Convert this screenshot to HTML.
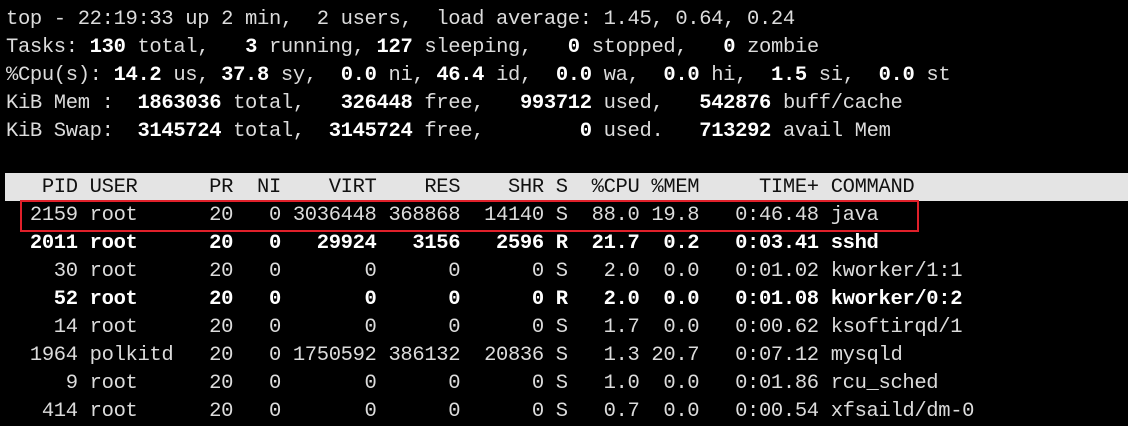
<!DOCTYPE html>
<html><head><style>
html,body{margin:0;padding:0;background:#000;width:1128px;height:414px;overflow:hidden}
pre{margin:0;position:absolute;left:6px;top:6px;font-family:"Liberation Mono",monospace;font-size:20.5px;letter-spacing:-0.35px;line-height:28px;color:#dcdcdc}
b{color:#fff}
.hdr{position:absolute;left:5px;top:173px;width:1123px;height:28px;background:#e4e4e4}
.hl{color:#111}
.box{position:absolute;left:20px;top:200px;width:895px;height:28px;border:2px solid #e0202a}
</style></head><body>
<div class="hdr"></div>
<pre>top - 22:19:33 up 2 min,  2 users,  load average: 1.45, 0.64, 0.24
Tasks: <b>130</b> total,   <b>3</b> running, <b>127</b> sleeping,   <b>0</b> stopped,   <b>0</b> zombie
%Cpu(s): <b>14.2</b> us, <b>37.8</b> sy,  <b>0.0</b> ni, <b>46.4</b> id,  <b>0.0</b> wa,  <b>0.0</b> hi,  <b>1.5</b> si,  <b>0.0</b> st
KiB Mem :  <b>1863036</b> total,   <b>326448</b> free,   <b>993712</b> used,   <b>542876</b> buff/cache
KiB Swap:  <b>3145724</b> total,  <b>3145724</b> free,        <b>0</b> used.   <b>713292</b> avail Mem

<span class="hl">   PID USER      PR  NI    VIRT    RES    SHR S  %CPU %MEM     TIME+ COMMAND</span>
  2159 root      20   0 3036448 368868  14140 S  88.0 19.8   0:46.48 java
<b>  2011 root      20   0   29924   3156   2596 R  21.7  0.2   0:03.41 sshd</b>
    30 root      20   0       0      0      0 S   2.0  0.0   0:01.02 kworker/1:1
<b>    52 root      20   0       0      0      0 R   2.0  0.0   0:01.08 kworker/0:2</b>
    14 root      20   0       0      0      0 S   1.7  0.0   0:00.62 ksoftirqd/1
  1964 polkitd   20   0 1750592 386132  20836 S   1.3 20.7   0:07.12 mysqld
     9 root      20   0       0      0      0 S   1.0  0.0   0:01.86 rcu_sched
   414 root      20   0       0      0      0 S   0.7  0.0   0:00.54 xfsaild/dm-0</pre>
<div class="box"></div>
</body></html>
